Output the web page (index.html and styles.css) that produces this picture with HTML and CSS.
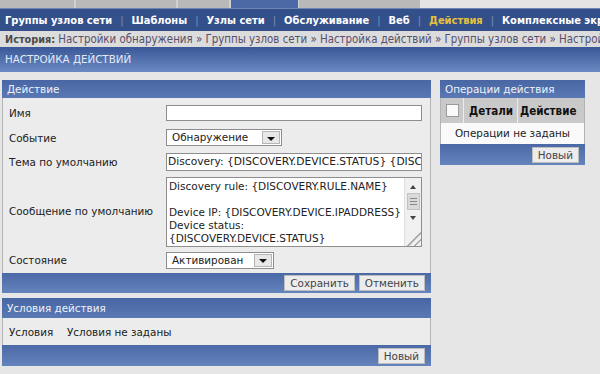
FILE: index.html
```html
<!DOCTYPE html>
<html>
<head>
<meta charset="utf-8">
<link rel="stylesheet" href="styles.css">
</head>
<body>
<div class="tabs">
  <div class="tab t1"></div>
  <div class="tab t2"></div>
  <div class="tab t3"></div>
  <div class="tab tab-active t4"></div>
  <div class="tab t5"></div>
  <div class="tab-rest"></div>
</div>
<div class="nav">
  <span class="nav-item">Группы узлов сети</span><span class="nav-sep">|</span>
  <span class="nav-item">Шаблоны</span><span class="nav-sep">|</span>
  <span class="nav-item">Узлы сети</span><span class="nav-sep">|</span>
  <span class="nav-item">Обслуживание</span><span class="nav-sep">|</span>
  <span class="nav-item">Веб</span><span class="nav-sep">|</span>
  <span class="nav-item nav-current">Действия</span><span class="nav-sep">|</span>
  <span class="nav-item">Комплексные экраны</span>
</div>
<div class="crumbs"><b>История:</b> Настройки обнаружения » Группы узлов сети » Настройка действий » Группы узлов сети » Настройки обнаружения</div>
<div class="page-title">НАСТРОЙКА ДЕЙСТВИЙ</div>

<div class="main">
  <div class="left">
    <div class="panel">
      <div class="panel-head">Действие</div>
      <div class="form-body">
        <div class="row r1"><div class="label">Имя</div><div class="input in-name"></div></div>
        <div class="row r2"><div class="label">Событие</div><div class="select sel-event"><span class="sel-text">Обнаружение</span><span class="sel-btn"><span class="tri"></span></span></div></div>
        <div class="row r3"><div class="label">Тема по умолчанию</div><div class="input in-subject">Discovery: {DISCOVERY.DEVICE.STATUS} {DISCOVERY.DEVICE.IPADDRESS}</div></div>
        <div class="row r4"><div class="label">Сообщение по умолчанию</div>
          <div class="textarea">
            <div class="ta-text">Discovery rule: {DISCOVERY.RULE.NAME}<br><br>Device IP: {DISCOVERY.DEVICE.IPADDRESS}<br>Device status:<br>{DISCOVERY.DEVICE.STATUS}</div>
            <div class="scroll">
              <span class="sc-up"></span>
              <span class="sc-thumb"><i></i><i></i><i></i></span>
              <span class="sc-down"></span>
              <span class="sc-grip"></span>
            </div>
          </div>
        </div>
        <div class="row r5"><div class="label">Состояние</div><div class="select sel-state"><span class="sel-text">Активирован</span><span class="sel-btn"><span class="tri"></span></span></div></div>
      </div>
      <div class="panel-foot foot1"><span class="btn">Сохранить</span><span class="btn">Отменить</span></div>
    </div>

    <div class="panel panel2">
      <div class="panel-head head2">Условия действия</div>
      <div class="cond-body"><span class="cond-label">Условия</span><span>Условия не заданы</span></div>
      <div class="panel-foot foot2"><span class="btn">Новый</span></div>
    </div>
  </div>

  <div class="right">
    <div class="panel">
      <div class="panel-head">Операции действия</div>
      <div class="ops-head">
        <div class="oh-check"><span class="checkbox"></span></div>
        <div class="oh-cell oh-det">Детали</div>
        <div class="oh-cell oh-act">Действие</div>
      </div>
      <div class="ops-empty">Операции не заданы</div>
      <div class="panel-foot foot3"><span class="btn">Новый</span></div>
    </div>
  </div>
</div>
</body>
</html>
```
FILE: styles.css
```css
* { box-sizing: border-box; }
html, body { margin: 0; padding: 0; }
body {
  width: 600px;
  height: 374px;
  overflow: hidden;
  background: #e6e6e6;
  font-family: "DejaVu Sans", Verdana, sans-serif;
  font-size: 10.4px;
  color: #222;
}
.tabs { display: flex; height: 8px; }
.tab { height: 8px; background: #b9b9b9; border-right: 2px solid #d0d0d0; }
.t1 { width: 76px; }
.t2 { width: 102px; }
.t3 { width: 53px; }
.t4 { width: 68px; }
.t5 { width: 121px; border-right: none; }
.tab-active { background: #4c69a5; border-right: 1px solid #d0d0d0; }
.tab-rest { flex: 1; background: #e4e4e4; }

.nav {
  height: 23px;
  background: #34508b;
  border-top: 1px solid #6d84b4;
  display: flex;
  align-items: center;
  padding-left: 5px;
  white-space: nowrap;
  overflow: hidden;
  color: #fff;
  font-family: "DejaVu Sans Condensed", "DejaVu Sans", sans-serif;
  font-weight: bold;
  font-size: 11px;
}
.nav-sep { color: #7d8fb8; font-weight: normal; margin: 0 8px; }
.nav-current { color: #e6c23c; }

.crumbs {
  height: 16px;
  line-height: 16px;
  background: #dcdcdc;
  color: #56506c;
  padding-left: 5px;
  white-space: nowrap;
  overflow: hidden;
  font-family: "DejaVu Sans Condensed", "DejaVu Sans", sans-serif;
  font-size: 11.4px;
}
.crumbs b { color: #4a4a4a; font-size: 10.8px; }

.page-title {
  height: 25px;
  line-height: 25px;
  background: linear-gradient(#3a5898, #6b89c2);
  color: #e4eaf5;
  padding-left: 5px;
  font-size: 10.3px;
}

.main { display: flex; padding: 8px 0 0 2px; gap: 9px; }
.left { width: 429px; display: flex; flex-direction: column; gap: 5px; }
.right { width: 145px; }

.panel { border: 1px solid #b4b4b4; border-top: none; background: #ececec; }
.panel-head {
  height: 18px;
  line-height: 18px;
  background: linear-gradient(#4866a3, #5a79b4);
  color: #eef2fa;
  padding-left: 5px;
  margin: 0 -1px;
}
.head2 { height: 20px; line-height: 20px; }

.form-body { padding-top: 3px; }
.row { display: flex; align-items: center; }
.r1 { height: 24px; }
.r2 { height: 25px; }
.r3 { height: 24px; }
.r4 { height: 73px; }
.r5 { height: 26px; }
.label { width: 163px; padding-left: 6px; color: #222; }

.input {
  background: #fff;
  border: 1px solid #8e8e8e;
  width: 256px;
  overflow: hidden;
  white-space: nowrap;
}
.in-name { height: 16px; }
.in-subject { height: 18px; line-height: 16px; padding-left: 1px; color: #222; font-size: 10.7px; }

.select {
  display: flex;
  background: #fff;
  border: 1px solid #8e8e8e;
  height: 17px;
}
.sel-event { width: 116px; }
.sel-state { width: 108px; }
.sel-text { flex: 1; padding-left: 5px; line-height: 15px; }
.sel-btn {
  width: 18px;
  background: #e8e8e8;
  display: flex;
  align-items: center;
  justify-content: center;
  margin: 1px;
  border: 1px solid #b5b5b5;
}
.tri {
  width: 0; height: 0;
  border-left: 4px solid transparent;
  border-right: 4px solid transparent;
  border-top: 4px solid #111;
  margin-top: 2px;
}

.textarea {
  width: 256px;
  height: 70px;
  background: #fff;
  border: 1px solid #8e8e8e;
  display: flex;
  margin-top: 2px;
}
.ta-text { flex: 1; padding: 2px 0 0 2px; line-height: 13px; white-space: nowrap; overflow: hidden; font-size: 10.5px; }
.scroll {
  width: 17px;
  background: #f0f0f0;
  border-left: 1px solid #e0e0e0;
  display: flex;
  flex-direction: column;
  align-items: center;
}
.sc-up {
  width: 0; height: 0; margin-top: 7px;
  border-left: 3px solid transparent; border-right: 3px solid transparent;
  border-bottom: 4px solid #444;
}
.sc-thumb {
  width: 13px; height: 17px; margin-top: 4px;
  background: #d9d9d9; border: 1px solid #c2c2c2;
  display: flex; flex-direction: column; align-items: center; justify-content: center; gap: 2px;
}
.sc-thumb i { display: block; width: 7px; height: 1px; background: #8a8a8a; }
.sc-down {
  width: 0; height: 0; margin-top: 6px;
  border-left: 3px solid transparent; border-right: 3px solid transparent;
  border-top: 4px solid #444;
}
.sc-grip {
  margin-top: auto; width: 16px; height: 16px;
  background: linear-gradient(135deg, transparent 55%, #aaa 56%, #aaa 62%, transparent 63%, transparent 75%, #aaa 76%, #aaa 82%, transparent 83%);
}

.panel-foot {
  background: linear-gradient(#4a69a6, #6584bd);
  display: flex;
  justify-content: flex-end;
  align-items: center;
  gap: 4px;
  padding-right: 6px;
  margin: 0 -1px -1px;
}
.foot1 { height: 20px; }
.foot2 { height: 21px; }
.foot3 { height: 21px; padding-right: 6px; }
.btn {
  background: #ececec;
  border: 1px solid #bdbdbd;
  color: #444;
  height: 16px;
  line-height: 14px;
  padding: 0 5px;
}

.cond-body { height: 27px; display: flex; align-items: center; padding-left: 6px; }
.cond-label { width: 58px; }

.ops-head { display: flex; height: 25px; background: #ececec; gap: 1px; }
.oh-check { width: 22px; background: #c9c9c9; display: flex; align-items: center; justify-content: center; }
.checkbox { width: 13px; height: 13px; background: #fafafa; border: 1px solid #9a9a9a; }
.oh-cell {
  background: #c9c9c9;
  font-family: "DejaVu Sans Condensed", "DejaVu Sans", sans-serif;
  font-weight: bold;
  display: flex;
  align-items: center;
  font-size: 11.5px;
  color: #111;
}
.oh-det { width: 53px; padding-left: 5px; }
.oh-act { flex: 1; padding-left: 2px; }
.ops-empty { height: 21px; background: #fafafa; text-align: center; line-height: 21px; }
```
